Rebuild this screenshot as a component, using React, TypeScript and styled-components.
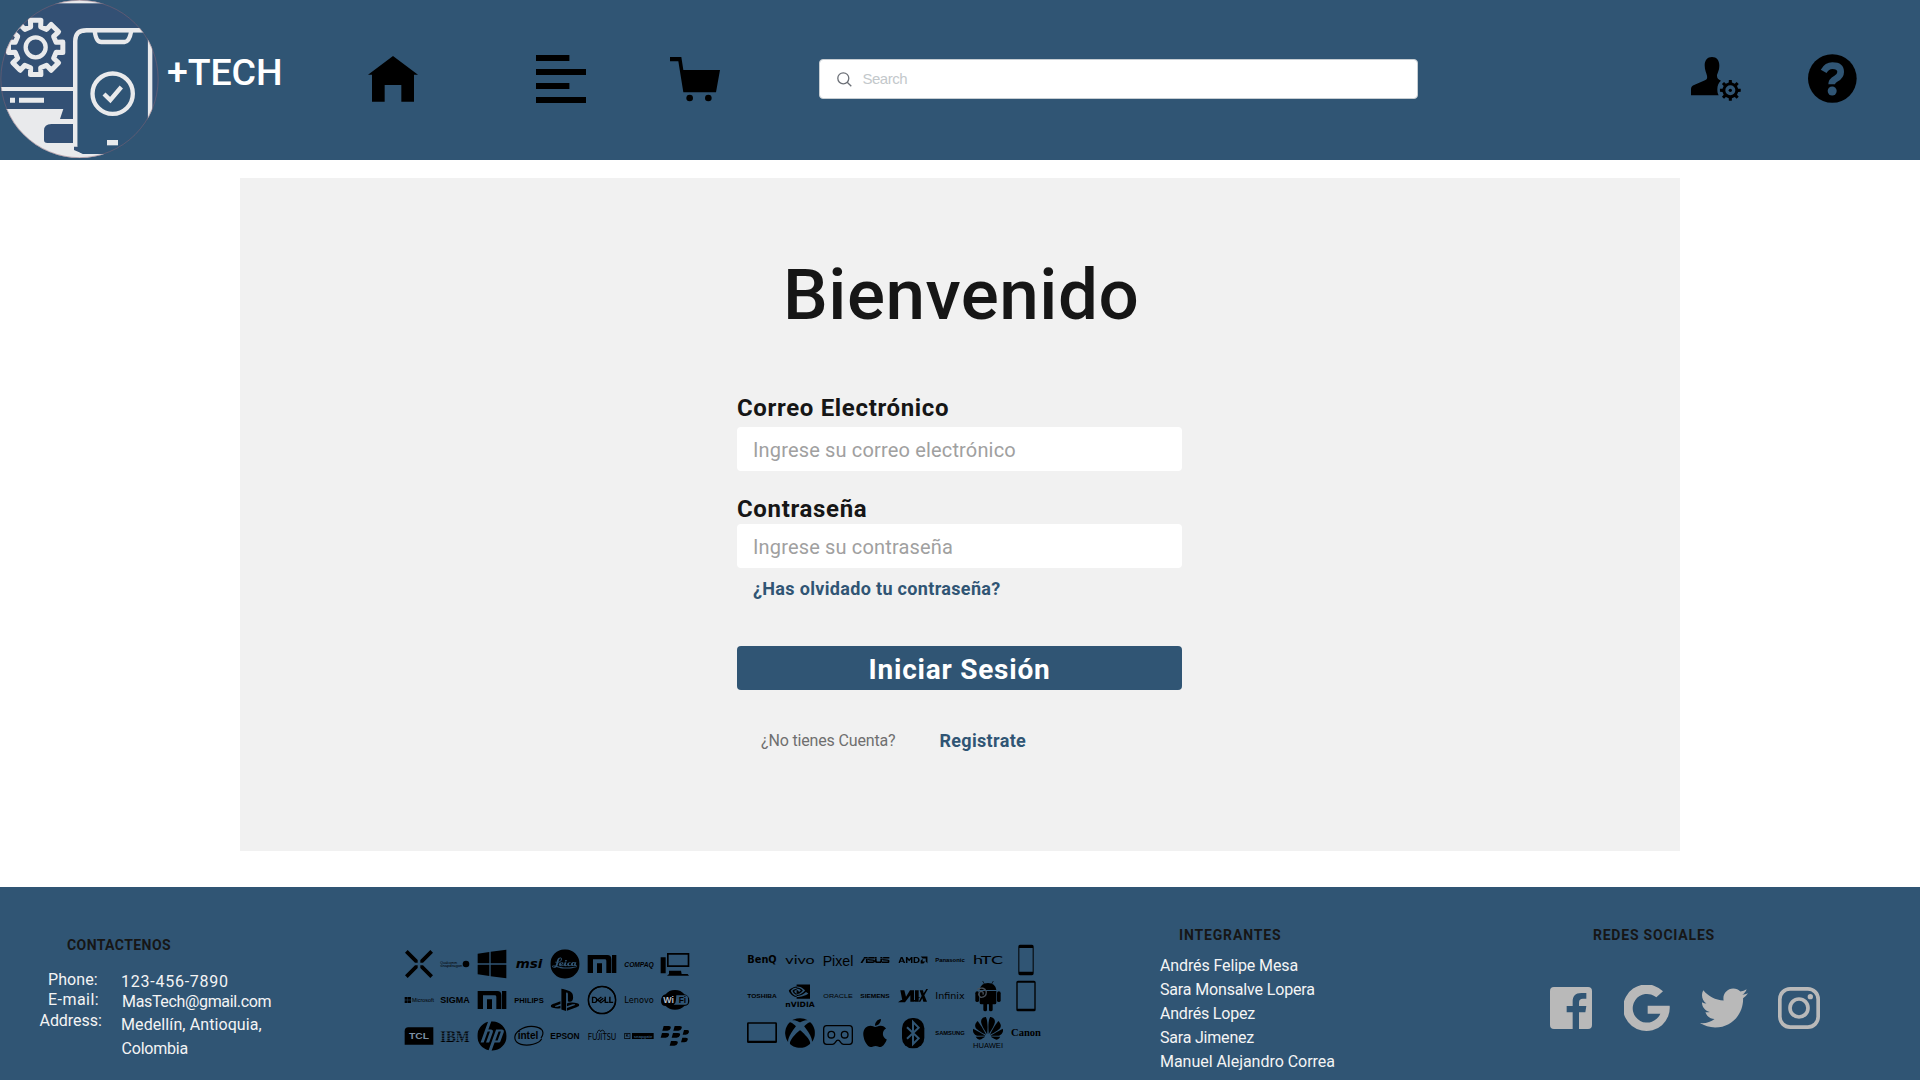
import React from 'react';
import styled, { createGlobalStyle } from 'styled-components';
import { FaApple, FaPlaystation, FaTwitter, FaXbox } from 'react-icons/fa';
import {
  SiAmd,
  SiAsus,
  SiDell,
  SiHp,
  SiHuawei,
  SiLeica,
  SiNvidia,
} from 'react-icons/si';

const BLUE = '#305574';
const INK = '#161616';

const GlobalStyle = createGlobalStyle`
  *, *::before, *::after { box-sizing: border-box; }
  html, body { margin: 0; padding: 0; background: #fff; }
  body { font-family: Roboto, "Noto Sans", sans-serif; color: ${INK}; }
  svg { display: block; flex: none; }
`;

const Page = styled.div`
  width: 1920px;
  height: 1080px;
  display: flex;
  flex-direction: column;
  overflow: hidden;
`;

/* ---------- Header ---------- */

const Header = styled.header`
  height: 160px;
  flex: none;
  display: flex;
  align-items: flex-start;
  background: ${BLUE};
`;

const Brand = styled.div`
  width: 368px;
  display: flex;
  align-items: flex-start;
`;

const BrandLabel = styled.span`
  margin: 50px 0 0 7px;
  font-size: 37.5px;
  font-weight: 500;
  line-height: 44px;
  letter-spacing: -0.1px;
  color: #fff;
`;

const NavButton = styled.a<{ $top: number; $gap?: number }>`
  display: block;
  margin: ${(p) => p.$top}px ${(p) => p.$gap ?? 0}px 0 0;
  color: #000;
`;

const SearchBox = styled.div`
  width: 599px;
  height: 40px;
  margin: 59px 273px 0 0;
  padding-left: 16.5px;
  display: flex;
  align-items: center;
  gap: 11px;
  background: #fff;
  border: 1px solid #c6cdd2;
  border-radius: 4px;
`;

const SearchHint = styled.span`
  font-family: "Liberation Sans", Arial, sans-serif;
  font-size: 15px;
  line-height: 20px;
  letter-spacing: -0.5px;
  color: #c3c8cb;
`;

/* ---------- Login panel ---------- */

const Panel = styled.main`
  width: 1440px;
  height: 673px;
  margin: 18px 0 36px 240px;
  padding: 75px 0 0 497px;
  flex: none;
  background: #f1f1f1;
`;

const Form = styled.div`
  width: 445px;
  display: flex;
  flex-direction: column;
`;

const Title = styled.h1`
  margin: 0 0 56px 46px;
  font-size: 71px;
  font-weight: 500;
  line-height: 84px;
  letter-spacing: 0.5px;
`;

const Label = styled.label<{ $space?: number }>`
  margin-bottom: ${(p) => p.$space ?? 0}px;
  font-size: 24px;
  font-weight: 700;
  line-height: 30px;
  letter-spacing: 0.66px;
`;

const Field = styled.div<{ $space: number }>`
  height: 44px;
  margin-bottom: ${(p) => p.$space}px;
  padding: 2px 16px 0;
  background: #fff;
  border-radius: 4px;
  font-size: 20px;
  line-height: 42px;
  letter-spacing: 0.16px;
  color: #a0a0a0;
`;

const TextLink = styled.a`
  font-size: 18px;
  font-weight: 700;
  line-height: 24px;
  letter-spacing: 0.33px;
  color: ${BLUE};
`;

const ForgotLink = styled(TextLink)`
  margin: 0 0 45px 16px;
`;

const Submit = styled.div`
  height: 44px;
  margin-bottom: 39px;
  padding-top: 1px;
  background: ${BLUE};
  border-radius: 4px;
  font-size: 28px;
  font-weight: 700;
  line-height: 45px;
  letter-spacing: 0.77px;
  text-align: center;
  color: #fff;
`;

const SignUp = styled.div`
  padding-left: 24px;
  display: flex;
  align-items: flex-start;
  gap: 44px;
`;

const SignUpHint = styled.span`
  font-size: 16px;
  line-height: 23px;
  letter-spacing: -0.16px;
  color: #6f6f6f;
`;

/* ---------- Footer ---------- */

const Footer = styled.footer`
  height: 193px;
  flex: none;
  display: grid;
  grid-template-columns: 403.7px 343.6px 412.7px 390px 1fr;
  align-items: start;
  background: ${BLUE};
`;

const FooterHeading = styled.h2<{ $indent: number; $spacing: number }>`
  margin: 0;
  padding-left: ${(p) => p.$indent}px;
  font-size: 14px;
  font-weight: 700;
  line-height: 20px;
  letter-spacing: ${(p) => p.$spacing}px;
`;

const Contact = styled.section`
  padding-top: 47.6px;
`;

const ContactBody = styled.div`
  margin-top: 15.4px;
  display: flex;
  align-items: flex-start;
`;

const ContactLabels = styled.div`
  width: 122px;
  padding-left: 48px;
`;

const Line = styled.div<{ $height: number; $spacing?: number; $shift?: number }>`
  margin-left: ${(p) => p.$shift ?? 0}px;
  font-size: 16px;
  line-height: ${(p) => p.$height}px;
  letter-spacing: ${(p) => p.$spacing ?? 0}px;
  white-space: nowrap;
  color: #f4f4f4;
`;

const ContactValues = styled.div`
  padding-top: 2px;
`;

const LogoGrid = styled.section<{ $top: number; $pitchX: number; $pitchY: number }>`
  padding-top: ${(p) => p.$top}px;
  display: grid;
  grid-template-columns: repeat(8, ${(p) => p.$pitchX}px);
  grid-auto-rows: ${(p) => p.$pitchY}px;
  color: #000;
`;

const Members = styled.section`
  padding-top: 38px;
`;

const MemberList = styled.div`
  margin-top: 8.5px;
`;

const Social = styled.section`
  padding-top: 38px;
`;

const SocialIcons = styled.div`
  margin-top: 39px;
  display: flex;
  align-items: center;
  color: #b9b9b9;
`;

const SocialSlot = styled.a<{ $gap: number }>`
  margin-right: ${(p) => p.$gap}px;
`;

/* ---------- Drawings ---------- */

const gearPath = (cx: number, cy: number, outer: number, inner: number, teeth: number, a = 0.15, b = 0.25) => {
  const pts: string[] = [];
  for (let i = 0; i < teeth; i++) {
    const c = (i * 2 * Math.PI) / teeth;
    [[inner, -b], [outer, -a], [outer, a], [inner, b]].forEach(([r, d]) =>
      pts.push(`${(cx + r * Math.cos(c + d)).toFixed(1)} ${(cy + r * Math.sin(c + d)).toFixed(1)}`),
    );
  }
  return `M${pts.join('L')}Z`;
};

const BrandLogo = () => (
  <svg width="160" height="160" viewBox="0 0 480 480">
    <defs>
      <clipPath id="disc">
        <circle cx="238.500" cy="237" r="237" />
      </clipPath>
    </defs>
    <g clipPath="url(#disc)">
      <rect width="480" height="480" fill="#335074" />
      <rect width="480" height="10" fill="#e9e9ec" />
      <path d={gearPath(107, 142, 83, 63, 8, 0.19, 0.24)} fill="none" stroke="#e9eaec" strokeWidth="15" strokeLinejoin="round" />
      <circle cx="107" cy="142" r="30" fill="none" stroke="#e9eaec" strokeWidth="13" />
      <path d="M0 261H222V273H0ZM30 293H45V308H30ZM57 293H132V308H57Z" fill="#e9eaec" />
      <path d="M0 327H190L180 357H222V372H154Q132 372 132 392V420Q132 429 142 429H222V450L250 462H330V480H0Z" fill="#e9eaec" />
      <path d="M226 440V124Q226 91 260 91H450V480" fill="none" stroke="#e9eaec" strokeWidth="14" />
      <path d="M233 120Q233 98 256 98H443V462H256Q233 462 233 436Z" fill="#2f5475" />
      <path d="M284 92Q288 126 304 126H374Q388 126 394 92" fill="none" stroke="#e9eaec" strokeWidth="13" />
      <circle cx="338" cy="281" r="60.500" fill="none" stroke="#e9eaec" strokeWidth="13" />
      <path d="M312 282L331 300L364 261" fill="none" stroke="#e9eaec" strokeWidth="13" />
      <rect x="321" y="420" width="33" height="16" fill="#e9eaec" />
    </g>
    <circle cx="238.500" cy="237" r="236" fill="none" stroke="#8d6672" strokeOpacity="0.7" strokeWidth="2" />
  </svg>
);

const HomeIcon = () => (
  <svg width="50" height="46" viewBox="0 0 150 138">
    <path d="M75 0L150 56H138V137H100V87H50V137H12V56H0Z" />
  </svg>
);

const ListIcon = () => (
  <svg width="50" height="48" viewBox="0 0 50 48">
    <path d="M0 0H33.400V6H0ZM0 14H50V20H0ZM0 28H33.400V34H0ZM0 42H50V48H0Z" />
  </svg>
);

const CartIcon = () => (
  <svg width="50" height="45" viewBox="0 0 150 135">
    <path d="M0 0H34L40 39H150L138 106H40L25 13H0Z" />
    <circle cx="59" cy="123" r="10" />
    <circle cx="115" cy="123" r="10" />
  </svg>
);

const UserGearIcon = () => (
  <svg width="50" height="44" viewBox="0 0 150 132">
    <path d="M63 0C77 0 85 10 85 25C85 42 79 48 78 56C78 64 82 67 90 71C83 77 79 84 79 97C79 105 80 110 83 115H0V96C0 90 3 86 11 83L42 70C49 67 49 62 48 56C46 48 41 40 41 25C41 10 49 0 63 0Z" />
    <path fillRule="evenodd" d={`${gearPath(118, 100, 31.5, 24, 8, 0.14, 0.2)}M133 100A15 15 0 1 0 103 100A15 15 0 1 0 133 100Z`} />
    <circle cx="118" cy="100" r="5" />
  </svg>
);

const HelpIcon = () => (
  <svg width="49" height="49" viewBox="0 0 147 147">
    <circle cx="73" cy="73.500" r="73" />
    <path d="M47 52Q57 35 73 35Q98 35 98 54Q98 66 84 74Q71 81 71 91" fill="none" stroke={BLUE} strokeWidth="20" />
    <circle cx="72.500" cy="111" r="13.500" fill={BLUE} />
  </svg>
);

const SearchIcon = () => (
  <svg width="15" height="15" viewBox="0 0 15 15" fill="none" stroke="#6c7077" strokeWidth="1.300">
    <circle cx="6.300" cy="6.300" r="5.500" />
    <path d="M10.200 10.300L14.300 14.300" />
  </svg>
);

const FacebookIcon = () => (
  <svg width="42" height="42" viewBox="0 0 126 126" fill="currentColor">
    <path d="M12 0H114Q126 0 126 12V114Q126 126 114 126H87V76H106L109 57H87V47C87 38 91 35 99 35H109V18H94C76 18 68 28 68 44V57H50V76H68V126H12Q0 126 0 114V12Q0 0 12 0Z" />
  </svg>
);

const GoogleIcon = () => (
  <svg width="46" height="47" viewBox="0 0 138 141" fill="currentColor">
    <path d="M117 19A70 70 0 1 0 137 62H71V86H109A43 43 0 1 1 97 37Z" />
  </svg>
);

const InstagramIcon = () => (
  <svg width="42" height="42" viewBox="0 0 126 126" fill="none" stroke="currentColor" strokeWidth="11">
    <rect x="5.500" y="5.500" width="115" height="115" rx="31" />
    <circle cx="63" cy="63" r="27" />
    <circle cx="97" cy="29" r="8" fill="currentColor" stroke="none" />
  </svg>
);

/* Brand marks share one 90-unit canvas centred on the origin. */
const Mark = ({ children }: { children: React.ReactNode }) => (
  <svg width="30" height="30" viewBox="-45 -45 90 90" overflow="visible" fill="#000">
    {children}
  </svg>
);

type WordProps = {
  t: string;
  w?: number;
  s?: number;
  y?: number;
  x?: number;
  weight?: number;
  italic?: boolean;
  font?: string;
  fill?: string;
};

const Word = ({ t, w = 88, s = 24, y = 0, x = 0, weight = 700, italic, font = 'Liberation Sans', fill = '#000' }: WordProps) => (
  <text
    x={x - w / 2}
    y={y + s * 0.36}
    textLength={w}
    lengthAdjust="spacingAndGlyphs"
    fontFamily={`"${font}", sans-serif`}
    fontSize={s}
    fontWeight={weight}
    fontStyle={italic ? 'italic' : 'normal'}
    fill={fill}
  >
    {t}
  </text>
);

const glyph = (size: number, y = 0, x = 0) => ({ size, x: x - size / 2, y: y - size / 2 });

const MiMark = () => (
  <path d="M-43 -27H16Q28 -27 28 -14V27H13V-10Q13 -14 8 -14H-27V27H-43ZM-15 -2H0V27H-15ZM30 -27H43V27H30Z" />
);

const leftMarks: React.ReactNode[] = [
  <path d="M-34 -42L-4 -12V-4H-12L-42 -34ZM34 -42L42 -34L12 -4H4V-12ZM-34 42L-42 34L-12 4H-4V12ZM34 42L4 12V4H12L42 34Z" />,
  <>
    <Word t="Qualcomm" w={50} s={11} x={-19} y={-5} weight={400} />
    <Word t="snapdragon" w={66} s={13} x={-11} y={5} weight={400} />
    <circle cx="33" cy="0" r="10" />
  </>,
  <path d="M-43 -31L-8 -36V-2H-43ZM-4 -37L43 -43V-2H-4ZM-43 2H-8V36L-43 31ZM-4 2H43V43L-4 37Z" />,
  <Word t="msi" w={80} s={38} y={-3} italic font="DejaVu Sans" />,
  <SiLeica {...glyph(88)} />,
  <MiMark />,
  <Word t="COMPAQ" s={21} italic />,
  <>
    <path d="M-43 -20H-28V28H-43ZM-18 20H18L20 30H38L42 35H-24L-18 30Z" />
    <path fillRule="evenodd" d="M-24 -33H43V9H-24ZM-19 -28V4H38V-28Z" />
  </>,
  <>
    <path d="M-43 -9H-34V-1H-43ZM-33 -9H-24V-1H-33ZM-43 1H-34V9H-43ZM-33 1H-24V9H-33Z" />
    <Word t="Microsoft" w={66} s={17} x={12} weight={400} />
  </>,
  <Word t="SIGMA" s={26} />,
  <MiMark />,
  <Word t="PHILIPS" s={22} />,
  <FaPlaystation {...glyph(86)} />,
  <>
    <circle cx="0" cy="0" r="41" fill="none" stroke="#000" strokeWidth="4" />
    <SiDell {...glyph(86)} />
  </>,
  <Word t="Lenovo" s={25} weight={400} font="DejaVu Sans" />,
  <>
    <path d="M-42 3Q-42 -14 -28 -17Q-18 -30 0 -30Q18 -30 28 -17Q43 -14 43 3Q43 16 28 18Q18 29 0 29Q-18 29 -28 18Q-42 18 -42 3Z" />
    <path d="M4 -14H30Q39 -14 39 -4V5Q39 14 30 14H-4Q3 10 3 0Z" fill={BLUE} />
    <Word t="Wi" w={32} s={26} x={-19} fill="#b4bdc7" />
    <Word t="Fi" w={22} s={26} x={22} />
  </>,
  <>
    <path d="M-32 -26H43V26H-43V-14Q-43 -26 -32 -26Z" />
    <Word t="TCL" w={60} s={25} fill="#7b8fa3" />
  </>,
  <>
    <Word t="IBM" w={88} s={50} font="Liberation Serif" />
    {[-12.5, -7.5, -2.5, 2.5, 7.5, 12.5].map((y) => (
      <rect key={y} x="-46" y={y - 1} width="92" height="2" fill={BLUE} />
    ))}
  </>,
  <SiHp {...glyph(88)} />,
  <>
    <path d="M36 -20C22 -32 -8 -32 -28 -18C-48 -4 -48 18 -24 25C-2 31 30 24 38 8M22 -27C40 -25 48 -10 36 6" fill="none" stroke="#000" strokeWidth="3.500" />
    <Word t="intel" w={62} s={31} x={-3} y={-1} />
  </>,
  <Word t="EPSON" s={26} />,
  <>
    <Word t="FUJITSU" w={86} s={26} y={2} weight={400} font="Lato" />
    <path d="M-14 -9C-14 -18 -5 -20 -4 -13C-2 -20 8 -18 7 -10" fill="none" stroke="#000" strokeWidth="2.500" />
  </>,
  <>
    <path fillRule="evenodd" d="M-44 -9H-26V9H-44ZM-42 -7V7H-28V-7ZM-21 -9H44V9H-21Z" />
    <Word t="K" w={9} s={11} x={-35} />
    <Word t="snapgate" w={56} s={13} x={12} fill={BLUE} />
  </>,
  <path d="M-34 -30H-19Q-11 -30 -13 -23Q-15 -16 -23 -16H-38ZM-1 -30H14Q22 -30 20 -23Q18 -16 10 -16H-5ZM-39 -9H-24Q-16 -9 -18 -2Q-20 5 -28 5H-43ZM-6 -9H9Q17 -9 15 -2Q13 5 5 5H-10ZM27 -18H37Q43 -18 42 -11Q40 -4 32 -4H23ZM22 5H32Q40 5 38 12Q36 19 28 19H18ZM-12 15H2Q10 15 8 22Q6 29 -2 29H-16Z" />,
];

const rightMarks: React.ReactNode[] = [
  <Word t="BenQ" s={30} font="DejaVu Sans" y={-2} />,
  <Word t="vivo" s={34} weight={400} font="Lato" y={-1} />,
  <Word t="Pixel" w={92} s={46} weight={400} />,
  <SiAsus {...glyph(88)} />,
  <SiAmd {...glyph(88)} />,
  <Word t="Panasonic" s={18} />,
  <Word t="hTC" w={90} s={36} weight={400} font="Lato" />,
  <path fillRule="evenodd" d="M-18 -46H18Q23 -46 23 -40V40Q23 46 18 46H-18Q-23 46 -23 40V-40Q-23 -46 -18 -46ZM-20 -36V35H20V-36Z" />,
  <Word t="TOSHIBA" s={18} />,
  <>
    <SiNvidia {...glyph(64, -13, -2)} />
    <Word t="nVIDIA" s={22} y={25} font="DejaVu Sans" />
  </>,
  <Word t="ORACLE" s={18} weight={400} />,
  <Word t="SIEMENS" s={18} />,
  <path d="M-38 -17H-26L-21 2L-9 -17H3V17H-8V-2L-24 19H-31ZM6 -17H17V17H6ZM20 -17H30L32 -8L40 -21H45L34 -2L42 17H31L28 7L22 17H17L26 0ZM-45 19L-26 5L-18 8L-32 19ZM-6 17L14 4H22L4 17Z" />,
  <Word t="Infinix" s={26} weight={400} font="DejaVu Sans" />,
  <>
    <path d="M-25 -18Q-22 -39 0 -39Q22 -39 25 -18ZM-25 -15H25V20Q25 25 20 25H14V41Q14 46 8 46Q3 46 3 41V25H-3V41Q-3 46 -8 46Q-14 46 -14 41V25H-20Q-25 25 -25 20Z" />
    <path d="M-16 -45L-10 -34M16 -45L10 -34" stroke="#000" strokeWidth="2" />
    <rect x="-38" y="-14" width="11" height="32" rx="5.500" />
    <rect x="27" y="-14" width="11" height="32" rx="5.500" />
    <path d="M-32 -20Q-12 -30 -5 -13Q-5 5 -22 4Q-34 -5 -22 -14Q-12 -14 -15 -4" fill="none" stroke="#47505a" strokeWidth="4" />
  </>,
  <path fillRule="evenodd" d="M-24 -46H24Q29 -46 29 -41V41Q29 46 24 46H-24Q-29 46 -29 41V-41Q-29 -46 -24 -46ZM-25 -40V38H25V-40Z" />,
  <path fillRule="evenodd" d="M-41 -32H41Q45 -32 45 -28V26Q45 30 41 30H-41Q-45 30 -45 26V-28Q-45 -32 -41 -32ZM-40 -28V23H40V-28Z" />,
  <FaXbox {...glyph(92)} />,
  <>
    <path d="M-34 -22H34Q43 -22 43 -12V25Q43 34 34 34H17Q12 34 8 28Q0 15 -8 28Q-12 34 -17 34H-34Q-43 34 -43 25V-12Q-43 -22 -34 -22Z" fill="none" stroke="#000" strokeWidth="4" />
    <circle cx="-20" cy="5" r="10" fill="none" stroke="#000" strokeWidth="4" />
    <circle cx="20" cy="5" r="10" fill="none" stroke="#000" strokeWidth="4" />
  </>,
  <FaApple {...glyph(96)} />,
  <>
    <rect x="-33" y="-45" width="67" height="91" rx="31" />
    <path d="M-18 -17L17 16L0 33V-33L17 -16L-18 17" fill="none" stroke={BLUE} strokeWidth="6" />
  </>,
  <Word t="SAMSUNG" s={16} />,
  <>
    <SiHuawei {...glyph(90, -14)} />
    <Word t="HUAWEI" w={90} s={21} y={37} weight={400} />
  </>,
  <Word t="Canon" w={90} s={29} font="Liberation Serif" />,
];

/* ---------- Page ---------- */

const members = [
  { name: 'Andrés Felipe Mesa', spacing: -0.11 },
  { name: 'Sara Monsalve Lopera', spacing: -0.15 },
  { name: 'Andrés Lopez', spacing: -0.2 },
  { name: 'Sara Jimenez', spacing: -0.2 },
  { name: 'Manuel Alejandro Correa', spacing: -0.03 },
];

export default function App() {
  return (
    <>
      <GlobalStyle />
      <Page>
        <Header>
          <Brand>
            <BrandLogo />
            <BrandLabel>+TECH</BrandLabel>
          </Brand>
          <NavButton $top={56} $gap={118}><HomeIcon /></NavButton>
          <NavButton $top={55} $gap={84}><ListIcon /></NavButton>
          <NavButton $top={57} $gap={99}><CartIcon /></NavButton>
          <SearchBox>
            <SearchIcon />
            <SearchHint>Search</SearchHint>
          </SearchBox>
          <NavButton $top={57} $gap={67}><UserGearIcon /></NavButton>
          <NavButton $top={54}><HelpIcon /></NavButton>
        </Header>

        <Panel>
          <Form>
            <Title>Bienvenido</Title>
            <Label $space={4}>Correo Electrónico</Label>
            <Field $space={23}>Ingrese su correo electrónico</Field>
            <Label>Contraseña</Label>
            <Field $space={9}>Ingrese su contraseña</Field>
            <ForgotLink>¿Has olvidado tu contraseña?</ForgotLink>
            <Submit>Iniciar Sesión</Submit>
            <SignUp>
              <SignUpHint>¿No tienes Cuenta?</SignUpHint>
              <TextLink>Registrate</TextLink>
            </SignUp>
          </Form>
        </Panel>

        <Footer>
          <Contact>
            <FooterHeading $indent={67} $spacing={0.42}>CONTACTENOS</FooterHeading>
            <ContactBody>
              <ContactLabels>
                <Line $height={20.3} $spacing={0.1}>Phone:</Line>
                <Line $height={20.3} $spacing={0.45}>E-mail:</Line>
                <Line $height={20.3} $shift={-8.5} $spacing={-0.05}>Address:</Line>
              </ContactLabels>
              <ContactValues>
                <Line $height={20} $spacing={0.75} $shift={-1}>123-456-7890</Line>
                <Line $height={19} $spacing={-0.34}>MasTech@gmail.com</Line>
                <Line $height={28} $spacing={0.1} $shift={-1}>Medellín, Antioquia,</Line>
                <Line $height={20} $spacing={-0.2} $shift={-0.5}>Colombia</Line>
              </ContactValues>
            </ContactBody>
          </Contact>

          <LogoGrid $top={62.3} $pitchX={36.65} $pitchY={35.8}>
            {leftMarks.map((mark, i) => <Mark key={i}>{mark}</Mark>)}
          </LogoGrid>

          <LogoGrid $top={57.6} $pitchX={37.65} $pitchY={36.8}>
            {rightMarks.map((mark, i) => <Mark key={i}>{mark}</Mark>)}
          </LogoGrid>

          <Members>
            <FooterHeading $indent={19} $spacing={0.85}>INTEGRANTES</FooterHeading>
            <MemberList>
              {members.map((m) => (
                <Line key={m.name} $height={24} $spacing={m.spacing}>{m.name}</Line>
              ))}
            </MemberList>
          </Members>

          <Social>
            <FooterHeading $indent={43} $spacing={0.78}>REDES SOCIALES</FooterHeading>
            <SocialIcons>
              <SocialSlot $gap={32}><FacebookIcon /></SocialSlot>
              <SocialSlot $gap={30}><GoogleIcon /></SocialSlot>
              <SocialSlot $gap={30}><FaTwitter size={48} /></SocialSlot>
              <SocialSlot $gap={0}><InstagramIcon /></SocialSlot>
            </SocialIcons>
          </Social>
        </Footer>
      </Page>
    </>
  );
}
